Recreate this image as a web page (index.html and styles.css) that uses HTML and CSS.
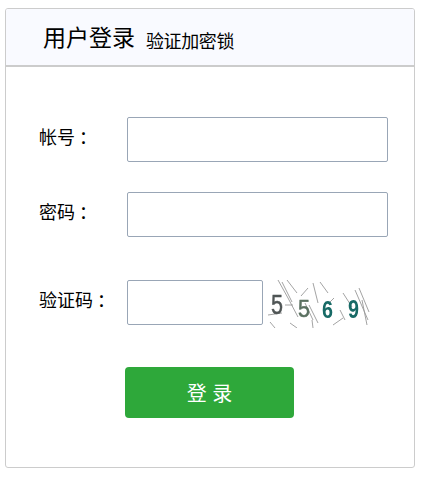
FILE: index.html
```html
<!DOCTYPE html>
<html lang="zh">
<head>
<meta charset="utf-8">
<title>用户登录</title>
<link rel="stylesheet" href="styles.css">
</head>
<body>
<div class="card">
  <div class="card-head">
    <span class="title">用户登录</span>
    <span class="subtitle">验证加密锁</span>
  </div>
  <form class="form">
    <div class="row">
      <label class="label">帐号<span class="colon">：</span></label>
      <input class="input" type="text">
    </div>
    <div class="row row-password">
      <label class="label">密码<span class="colon">：</span></label>
      <input class="input" type="password">
    </div>
    <div class="row row-captcha">
      <label class="label">验证码<span class="colon">：</span></label>
      <input class="input input-short" type="text">
      <svg class="captcha" width="102" height="50" viewBox="0 0 102 50">
        <g fill="none" stroke="#999" stroke-width="0.9">
          <path d="M10 2 L20 20 L30 39 M14 4 L24 24 M19 2 L29 15 M45 5 L50 25 M52 4 L60 15 M37 25 L45 42 M41 27 L50 45"/>
          <path d="M75 15 L84 29 M87 12 L100 42 M91 10 L101 34 M94 22 L99 47 M72 32 L77 42 M2 44 L7 50"/>
          <path d="M22 45 L29 50 M44 42 L45 50 M65 47 L75 40 M17 27 L25 27 M0 37 L14 35 M60 26 L66 20 M33 18 L40 10"/>
        </g>
        <text class="digit digit-grey" x="3" y="36" textLength="12" lengthAdjust="spacingAndGlyphs">5</text>
        <text class="digit digit-olive digit-small" x="30" y="39" textLength="12" lengthAdjust="spacingAndGlyphs">5</text>
        <text class="digit digit-teal digit-mid" x="54" y="40" textLength="11" lengthAdjust="spacingAndGlyphs">6</text>
        <text class="digit digit-teal digit-tall" x="80" y="40" textLength="11" lengthAdjust="spacingAndGlyphs">9</text>
      </svg>
    </div>
    <button class="submit" type="button">登 录</button>
  </form>
</div>
</body>
</html>
```
FILE: styles.css
```css
* {
  box-sizing: border-box;
}

html,
body {
  margin: 0;
  padding: 0;
  background: #fff;
}

body {
  padding: 8px 0 0 5px;
  font-family: "Liberation Sans", "Noto Sans CJK SC", sans-serif;
  color: #000;
}

.card {
  width: 410px;
  height: 460px;
  border: 1px solid #ccc;
  border-radius: 3px;
  overflow: hidden;
}

.card-head {
  height: 58px;
  padding: 0 0 0 37px;
  display: flex;
  align-items: flex-start;
  background: #f9faff;
  border-bottom: 2px solid #ccc;
}

.title {
  font-size: 23px;
  line-height: 58px;
}

.subtitle {
  font-size: 18px;
  line-height: 26px;
  letter-spacing: -0.4px;
  margin: 20px 0 0 11px;
}

.form {
  display: flex;
  flex-direction: column;
  padding: 50px 0 0 33px;
}

.row {
  display: flex;
  align-items: flex-start;
  height: 45px;
}

.row-password {
  margin-top: 30px;
}

.row-captcha {
  margin-top: 43px;
}

.label {
  width: 88px;
  flex: none;
  font-size: 18px;
  line-height: 42px;
  white-space: nowrap;
}

.colon {
  margin-left: 4px;
}

.input {
  width: 261px;
  height: 45px;
  border: 1px solid #99a6b6;
  border-radius: 2px;
  background: #fff;
  padding: 0 6px;
  outline: none;
}

.input-short {
  width: 136px;
}

.captcha {
  flex: none;
  margin: -2px 0 0 5px;
  background: #fff;
  filter: blur(0.4px);
}

.digit {
  font-family: "Liberation Sans", sans-serif;
  font-size: 28px;
}

.digit-small {
  font-size: 24px;
}

.digit-mid {
  font-size: 23px;
}

.digit-tall {
  font-size: 26px;
}

.digit-grey {
  fill: #4f5555;
  stroke: #4f5555;
  stroke-width: 0.5px;
}

.digit-olive {
  fill: #5a7060;
  stroke: #5a7060;
  stroke-width: 0.5px;
}

.digit-teal {
  fill: #176a66;
  font-weight: 700;
}

.submit {
  align-self: flex-start;
  width: 169px;
  height: 51px;
  margin: 42px 0 0 86px;
  border: 0;
  border-radius: 4px;
  background: #2ea83a;
  color: #fff;
  font-family: inherit;
  font-size: 20px;
  cursor: pointer;
}
```
